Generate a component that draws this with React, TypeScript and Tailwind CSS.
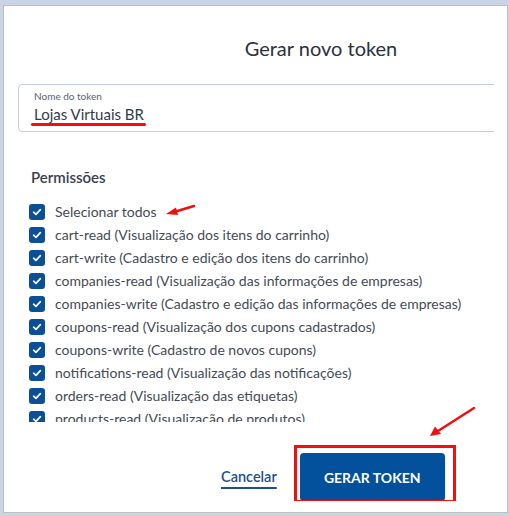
import React from "react";

const permissions = [
  "Selecionar todos",
  "cart-read (Visualização dos itens do carrinho)",
  "cart-write (Cadastro e edição dos itens do carrinho)",
  "companies-read (Visualização das informações de empresas)",
  "companies-write (Cadastro e edição das informações de empresas)",
  "coupons-read (Visualização dos cupons cadastrados)",
  "coupons-write (Cadastro de novos cupons)",
  "notifications-read (Visualização das notificações)",
  "orders-read (Visualização das etiquetas)",
  "products-read (Visualização de produtos)",
];

const CheckBox = () => (
  <span className="flex size-[16px] shrink-0 items-center justify-center rounded-[3px] bg-[#0b4f97]">
    <svg viewBox="0 0 16 16" className="size-[12px]" fill="none">
      <path d="M3.5 8.3 6.6 11.2 12.5 4.9" stroke="white" strokeWidth="2.2" strokeLinecap="round" strokeLinejoin="round" />
    </svg>
  </span>
);

export default function App() {
  return (
    <div className="relative h-[516px] w-[509px] overflow-hidden bg-white font-['Lato',sans-serif]">
      <div className="h-[516px] bg-[#c9d4e7] pl-[3px] pt-[5px]">
        <div className="h-[508px] w-[505px] border border-[#bfbfbf] bg-white">
          <div className="w-[490px] overflow-hidden pl-[14px]">
            <div className="w-[606px]">
              <h1 className="pt-[28px] text-center text-[20px] leading-[28px] text-[#2b3240]">Gerar novo token</h1>

              <div className="mt-[22px] h-[48px] rounded-[4px] border border-[#c7cedb] pl-[15px] pt-[5px]">
                <div className="text-[10px] leading-[12px] text-[#5b6270]">Nome do token</div>
                <span className="relative inline-block text-[15px] leading-[20px] text-[#353b46]">
                  Lojas Virtuais BR
                  <span className="absolute -left-[3px] -right-[2px] top-[19px] h-[3px] rounded-full bg-[#f20f0f]" />
                </span>
              </div>
            </div>

            <div className="h-[290px] overflow-hidden pl-[11px] pt-[35px]">
              <h2 className="pl-[2px] text-[15px] font-semibold leading-[20px] text-[#3a404c]">Permissões</h2>
              <ul className="mt-[13px]">
                {permissions.map((p) => (
                  <li key={p} className="flex h-[23px] items-center gap-[10px] whitespace-nowrap text-[14px] text-[#454b55]">
                    <CheckBox />
                    <span>{p}</span>
                  </li>
                ))}
              </ul>
            </div>

            <div className="mt-[31px] flex items-center pl-[203px]">
              <button className="text-[14.5px] font-semibold text-[#1d4f8c] underline decoration-[1.5px] underline-offset-[5px]">
                Cancelar
              </button>
              <div className="relative ml-[23px]">
                <button className="h-[48px] w-[145px] rounded-[4px] bg-[#03509c] text-[14px] font-bold text-white shadow-[0_1px_2px_rgba(0,0,0,0.25)]">
                  GERAR TOKEN
                </button>
                <span className="pointer-events-none absolute -bottom-[2px] -left-[6px] -right-[11px] -top-[8px] border-[3px] border-[#f20f0f]" />
              </div>
            </div>
          </div>
        </div>
      </div>

      <svg className="pointer-events-none absolute left-0 top-0" width="509" height="516" viewBox="0 0 509 516">
        <line x1="194" y1="206" x2="174" y2="212" stroke="#f20f0f" strokeWidth="2.5" strokeLinecap="round" />
        <polygon points="166,214 176,207.5 178,215" fill="#f20f0f" />
        <line x1="474" y1="408" x2="438" y2="431" stroke="#f20f0f" strokeWidth="2.5" strokeLinecap="round" />
        <polygon points="430,436 435,426.5 441,434" fill="#f20f0f" />
      </svg>
    </div>
  );
}
